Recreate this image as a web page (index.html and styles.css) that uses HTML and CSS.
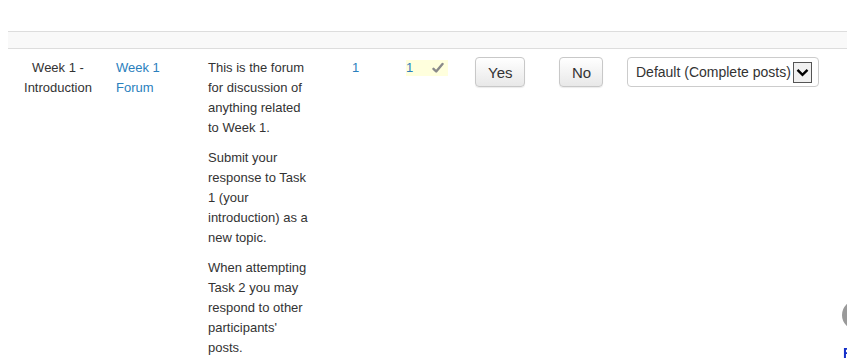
FILE: index.html
```html
<!DOCTYPE html>
<html lang="en">
<head>
    <meta charset="UTF-8">
    <title>Forums</title>
    <link rel="stylesheet" href="styles.css">
</head>
<body>
    <table class="forums">
        <colgroup>
            <col class="c-section">
            <col class="c-name">
            <col class="c-desc">
            <col class="c-topics">
            <col class="c-unread">
            <col class="c-yes">
            <col class="c-no">
            <col class="c-digest">
        </colgroup>
        <thead>
            <tr><th colspan="8"></th></tr>
        </thead>
        <tbody>
            <tr>
                <td class="section">Week 1 -<br>Introduction</td>
                <td class="name"><a href="#">Week 1<br>Forum</a></td>
                <td class="desc">
                    <p>This is the forum for discussion of anything related to Week 1.</p>
                    <p>Submit your response to Task 1 (your introduction) as a new topic.</p>
                    <p>When attempting Task 2 you may respond to other participants' posts.</p>
                </td>
                <td class="topics"><a href="#">1</a></td>
                <td class="unread">
                    <span class="highlight">
                        <a href="#">1</a>
                        <svg class="check" width="12" height="12" viewBox="0 0 12 12">
                            <path d="M1.5 6.8 L4.2 9.5 L10.5 2" fill="none" stroke="#8a8a8a" stroke-width="2.4" stroke-linecap="round" stroke-linejoin="round"/>
                        </svg>
                    </span>
                </td>
                <td class="track"><button class="btn btn-yes">Yes</button></td>
                <td class="track"><button class="btn btn-no">No</button></td>
                <td class="digest">
                    <div class="select">
                        <span>Default (Complete posts)</span>
                        <span class="arrow">
                            <svg width="13" height="9" viewBox="0 0 13 9">
                                <path d="M1.5 1.8 L6.5 6.8 L11.5 1.8" fill="none" stroke="#000" stroke-width="2.4"/>
                            </svg>
                        </span>
                    </div>
                </td>
            </tr>
        </tbody>
    </table>

    <!-- floating widget, cut off at the right edge -->
    <div class="float-dot"></div>
    <a class="float-link" href="#">R</a>
</body>
</html>
```

FILE: styles.css
```css
body {
    margin: 8px 0 8px 8px;
    font-family: "Liberation Sans", Arial, sans-serif;
    font-size: 13px;
    color: #333;
    background: #fff;
}

a {
    color: #2a80bd;
    text-decoration: none;
}

.forums {
    margin-top: 23px;
    width: 100%;
    border-collapse: collapse;
    table-layout: fixed;
}

.c-section { width: 100px; }
.c-name { width: 92px; }
.c-desc { width: 144px; }
.c-topics { width: 54px; }
.c-unread { width: 69px; }
.c-yes { width: 84px; }
.c-no { width: 68px; }

.forums th {
    height: 16px;
    padding: 0;
    background: #f9f9f9;
    border-top: 1px solid #ddd;
    border-bottom: 1px solid #ddd;
}

.forums td {
    padding: 9px 8px 0 8px;
    line-height: 20px;
    vertical-align: top;
    text-align: left;
}

.forums td.section {
    text-align: center;
}

.desc p {
    margin: 0 0 10px 0;
    width: 104px;
}

.unread .highlight {
    display: inline-flex;
    align-items: center;
    justify-content: space-between;
    width: 42px;
    height: 16px;
    margin-top: 2px;
    background: #ffffdd;
    line-height: 16px;
}

.check {
    margin-right: 4px;
}

.forums td.track,
.forums td.digest {
    padding-top: 8px;
}

.btn {
    display: block;
    height: 30px;
    padding: 0 12px;
    font-family: "Liberation Sans", Arial, sans-serif;
    font-size: 15px;
    color: #333;
    background: linear-gradient(#ffffff, #e8e8e8);
    border: 1px solid #c8c8c8;
    border-radius: 4px;
    box-shadow: 0 1px 1px rgba(0, 0, 0, 0.08);
}

.btn-yes { width: 50px; }
.btn-no { width: 44px; }

.select {
    display: flex;
    align-items: center;
    justify-content: space-between;
    width: 192px;
    height: 30px;
    box-sizing: border-box;
    padding: 0 6px 0 8px;
    border: 1px solid #ccc;
    border-radius: 4px;
    font-size: 14px;
    color: #333;
    background: #fff;
}

.select .arrow {
    display: flex;
    align-items: center;
    justify-content: center;
    width: 17px;
    height: 19px;
    border: 1px solid #555;
    background: #f0f0f0;
}

.float-dot {
    position: fixed;
    left: 842px;
    top: 300px;
    width: 30px;
    height: 30px;
    border-radius: 50%;
    background: #9a9a9a;
}

.float-link {
    position: fixed;
    left: 843px;
    top: 345px;
    font-size: 14px;
    font-weight: bold;
    color: #1530c8;
}
```
